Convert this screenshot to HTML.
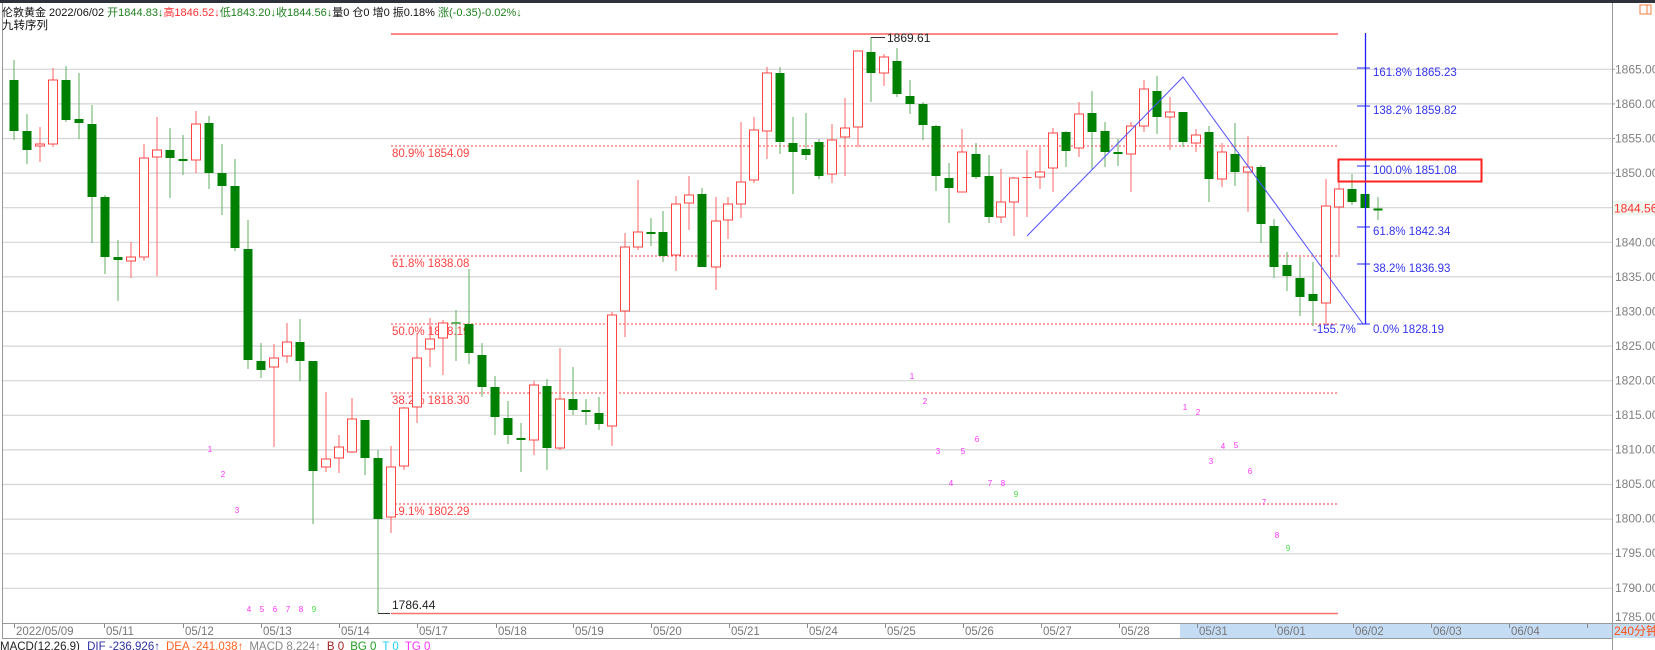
<!DOCTYPE html>
<html><head><meta charset="utf-8"><style>
html,body{margin:0;padding:0;background:#fff;width:1655px;height:650px;overflow:hidden}
svg{display:block}
text{font-family:"Liberation Sans","Noto Sans CJK SC",sans-serif}
</style></head><body>
<svg width="1655" height="650" viewBox="0 0 1655 650" xmlns="http://www.w3.org/2000/svg">
<rect x="0" y="0" width="1655" height="650" fill="#fff"/>
<rect x="0" y="0" width="1655" height="3" fill="#2e333b"/>
<line x1="2.5" y1="3" x2="2.5" y2="638" stroke="#999"/>
<g stroke="#d4d4d4" stroke-width="1.2">
<line x1="3" y1="69.3" x2="1612" y2="69.3"/><line x1="3" y1="103.9" x2="1612" y2="103.9"/>
<line x1="3" y1="138.5" x2="1612" y2="138.5"/><line x1="3" y1="173.1" x2="1612" y2="173.1"/>
<line x1="3" y1="207.7" x2="1612" y2="207.7"/><line x1="3" y1="242.3" x2="1612" y2="242.3"/>
<line x1="3" y1="276.9" x2="1612" y2="276.9"/><line x1="3" y1="311.5" x2="1612" y2="311.5"/>
<line x1="3" y1="346.1" x2="1612" y2="346.1"/><line x1="3" y1="380.7" x2="1612" y2="380.7"/>
<line x1="3" y1="415.3" x2="1612" y2="415.3"/><line x1="3" y1="449.9" x2="1612" y2="449.9"/>
<line x1="3" y1="484.5" x2="1612" y2="484.5"/><line x1="3" y1="519.1" x2="1612" y2="519.1"/>
<line x1="3" y1="553.7" x2="1612" y2="553.7"/><line x1="3" y1="588.3" x2="1612" y2="588.3"/>
</g>
<line x1="1612.5" y1="3" x2="1612.5" y2="650" stroke="#999"/>
<g font-size="12" fill="#808080">
<text x="1615" y="73.5">1865.00</text><text x="1615" y="108">1860.00</text>
<text x="1615" y="142.5">1855.00</text><text x="1615" y="177">1850.00</text>
<text x="1615" y="246.5">1840.00</text><text x="1615" y="281">1835.00</text>
<text x="1615" y="315.5">1830.00</text><text x="1615" y="350">1825.00</text>
<text x="1615" y="384.5">1820.00</text><text x="1615" y="419">1815.00</text>
<text x="1615" y="453.5">1810.00</text><text x="1615" y="488">1805.00</text>
<text x="1615" y="522.5">1800.00</text><text x="1615" y="557">1795.00</text>
<text x="1615" y="592">1790.00</text><text x="1615" y="621">1785.00</text>
</g>
<g stroke="#999" stroke-width="1">
<line x1="1612" y1="69.3" x2="1615" y2="69.3"/><line x1="1612" y1="103.9" x2="1615" y2="103.9"/><line x1="1612" y1="138.5" x2="1615" y2="138.5"/><line x1="1612" y1="173.1" x2="1615" y2="173.1"/>
</g>
<rect x="1613" y="201" width="42" height="14" fill="#eef7ee"/>
<text x="1614" y="212.5" font-size="12" fill="#ff3030">1844.56</text>
<rect x="1640" y="5" width="11" height="9" fill="none" stroke="#f08040"/>
<line x1="1647" y1="5" x2="1647" y2="14" stroke="#f08040"/>
<line x1="391" y1="34" x2="1338" y2="34" stroke="#ff4040" stroke-width="1.3"/>
<line x1="391" y1="613.5" x2="1338" y2="613.5" stroke="#ff7070" stroke-width="1.5"/>
<g stroke="#ff4040" stroke-dasharray="2,2" stroke-width="1">
<line x1="391" y1="146" x2="1338" y2="146"/><line x1="391" y1="256" x2="1338" y2="256"/>
<line x1="391" y1="324" x2="1338" y2="324"/><line x1="391" y1="393" x2="1338" y2="393"/>
<line x1="391" y1="504" x2="1338" y2="504"/>
</g>
<g font-size="11.5" fill="#ff4040">
<text x="392" y="157">80.9% 1854.09</text><text x="392" y="267">61.8% 1838.08</text>
<text x="392" y="335">50.0% 1828.19</text><text x="392" y="404">38.2% 1818.30</text>
<text x="392" y="515">19.1% 1802.29</text>
</g>
<g>
<line x1="14" y1="60" x2="14" y2="140" stroke="#5fae5f"/><rect x="9.5" y="80" width="9" height="51" fill="#008000"/>
<line x1="27" y1="114" x2="27" y2="164" stroke="#5fae5f"/><rect x="22.5" y="131" width="9" height="19" fill="#008000"/>
<line x1="40" y1="127" x2="40" y2="162" stroke="#ff6666"/><rect x="35.5" y="144" width="9" height="2" fill="#fff" stroke="#ff4444"/>
<line x1="53" y1="68" x2="53" y2="147" stroke="#ff6666"/><rect x="48.5" y="80" width="9" height="64" fill="#fff" stroke="#ff4444"/>
<line x1="66" y1="66" x2="66" y2="122" stroke="#5fae5f"/><rect x="61.5" y="80" width="9" height="40" fill="#008000"/>
<line x1="79" y1="73" x2="79" y2="139" stroke="#5fae5f"/><rect x="74.5" y="119" width="9" height="4" fill="#008000"/>
<line x1="92" y1="105" x2="92" y2="243" stroke="#5fae5f"/><rect x="87.5" y="124" width="9" height="73" fill="#008000"/>
<line x1="105" y1="195" x2="105" y2="274" stroke="#5fae5f"/><rect x="100.5" y="197" width="9" height="60" fill="#008000"/>
<line x1="118" y1="240" x2="118" y2="301" stroke="#5fae5f"/><rect x="113.5" y="257" width="9" height="3" fill="#008000"/>
<line x1="131" y1="242" x2="131" y2="278" stroke="#ff6666"/><rect x="126.5" y="257" width="9" height="4" fill="#fff" stroke="#ff4444"/>
<line x1="144" y1="144" x2="144" y2="261" stroke="#ff6666"/><rect x="139.5" y="158" width="9" height="99" fill="#fff" stroke="#ff4444"/>
<line x1="157" y1="117" x2="157" y2="276" stroke="#ff6666"/><rect x="152.5" y="150" width="9" height="7" fill="#fff" stroke="#ff4444"/>
<line x1="170" y1="128" x2="170" y2="198" stroke="#5fae5f"/><rect x="165.5" y="150" width="9" height="8" fill="#008000"/>
<line x1="183" y1="135" x2="183" y2="175" stroke="#5fae5f"/><rect x="178.5" y="159" width="9" height="2" fill="#008000"/>
<line x1="196" y1="111" x2="196" y2="173" stroke="#ff6666"/><rect x="191.5" y="124" width="9" height="36" fill="#fff" stroke="#ff4444"/>
<line x1="209" y1="116" x2="209" y2="189" stroke="#5fae5f"/><rect x="204.5" y="123" width="9" height="50" fill="#008000"/>
<line x1="222" y1="144" x2="222" y2="215" stroke="#5fae5f"/><rect x="217.5" y="173" width="9" height="13" fill="#008000"/>
<line x1="235" y1="159" x2="235" y2="251" stroke="#5fae5f"/><rect x="230.5" y="186" width="9" height="62" fill="#008000"/>
<line x1="248" y1="220" x2="248" y2="369" stroke="#5fae5f"/><rect x="243.5" y="249" width="9" height="111" fill="#008000"/>
<line x1="261" y1="343" x2="261" y2="378" stroke="#5fae5f"/><rect x="256.5" y="361" width="9" height="9" fill="#008000"/>
<line x1="274" y1="344" x2="274" y2="447" stroke="#ff6666"/><rect x="269.5" y="358" width="9" height="9" fill="#fff" stroke="#ff4444"/>
<line x1="287" y1="323" x2="287" y2="363" stroke="#ff6666"/><rect x="282.5" y="342" width="9" height="14" fill="#fff" stroke="#ff4444"/>
<line x1="300" y1="319" x2="300" y2="381" stroke="#5fae5f"/><rect x="295.5" y="342" width="9" height="19" fill="#008000"/>
<line x1="313" y1="361" x2="313" y2="524" stroke="#5fae5f"/><rect x="308.5" y="361" width="9" height="110" fill="#008000"/>
<line x1="326" y1="392" x2="326" y2="472" stroke="#ff6666"/><rect x="321.5" y="459" width="9" height="8" fill="#fff" stroke="#ff4444"/>
<line x1="339" y1="435" x2="339" y2="473" stroke="#ff6666"/><rect x="334.5" y="447" width="9" height="11" fill="#fff" stroke="#ff4444"/>
<line x1="352" y1="398" x2="352" y2="453" stroke="#ff6666"/><rect x="347.5" y="419" width="9" height="33" fill="#fff" stroke="#ff4444"/>
<line x1="365" y1="420" x2="365" y2="475" stroke="#5fae5f"/><rect x="360.5" y="420" width="9" height="38" fill="#008000"/>
<line x1="378" y1="450" x2="378" y2="613" stroke="#5fae5f"/><rect x="373.5" y="458" width="9" height="61" fill="#008000"/>
<line x1="391" y1="446" x2="391" y2="533" stroke="#ff6666"/><rect x="386.5" y="467" width="9" height="50" fill="#fff" stroke="#ff4444"/>
<line x1="404" y1="407" x2="404" y2="470" stroke="#ff6666"/><rect x="399.5" y="408" width="9" height="58" fill="#fff" stroke="#ff4444"/>
<line x1="417" y1="333" x2="417" y2="423" stroke="#ff6666"/><rect x="412.5" y="358" width="9" height="49" fill="#fff" stroke="#ff4444"/>
<line x1="430" y1="318" x2="430" y2="367" stroke="#ff6666"/><rect x="425.5" y="339" width="9" height="10" fill="#fff" stroke="#ff4444"/>
<line x1="443" y1="320" x2="443" y2="375" stroke="#ff6666"/><rect x="438.5" y="323" width="9" height="15" fill="#fff" stroke="#ff4444"/>
<line x1="456" y1="310" x2="456" y2="361" stroke="#5fae5f"/><rect x="451.5" y="322" width="9" height="2" fill="#5fae5f"/>
<line x1="469" y1="269" x2="469" y2="364" stroke="#5fae5f"/><rect x="464.5" y="324" width="9" height="29" fill="#008000"/>
<line x1="482" y1="343" x2="482" y2="397" stroke="#5fae5f"/><rect x="477.5" y="355" width="9" height="32" fill="#008000"/>
<line x1="495" y1="376" x2="495" y2="435" stroke="#5fae5f"/><rect x="490.5" y="387" width="9" height="30" fill="#008000"/>
<line x1="508" y1="401" x2="508" y2="444" stroke="#5fae5f"/><rect x="503.5" y="418" width="9" height="17" fill="#008000"/>
<line x1="521" y1="423" x2="521" y2="472" stroke="#5fae5f"/><rect x="516.5" y="438" width="9" height="2" fill="#008000"/>
<line x1="534" y1="381" x2="534" y2="455" stroke="#ff6666"/><rect x="529.5" y="385" width="9" height="55" fill="#fff" stroke="#ff4444"/>
<line x1="547" y1="379" x2="547" y2="470" stroke="#5fae5f"/><rect x="542.5" y="386" width="9" height="62" fill="#008000"/>
<line x1="560" y1="348" x2="560" y2="450" stroke="#ff6666"/><rect x="555.5" y="399" width="9" height="49" fill="#fff" stroke="#ff4444"/>
<line x1="573" y1="367" x2="573" y2="415" stroke="#5fae5f"/><rect x="568.5" y="399" width="9" height="11" fill="#008000"/>
<line x1="586" y1="399" x2="586" y2="425" stroke="#5fae5f"/><rect x="581.5" y="410" width="9" height="2" fill="#008000"/>
<line x1="599" y1="397" x2="599" y2="430" stroke="#5fae5f"/><rect x="594.5" y="413" width="9" height="11" fill="#008000"/>
<line x1="612" y1="312" x2="612" y2="446" stroke="#ff6666"/><rect x="607.5" y="315" width="9" height="111" fill="#fff" stroke="#ff4444"/>
<line x1="625" y1="233" x2="625" y2="337" stroke="#ff6666"/><rect x="620.5" y="247" width="9" height="64" fill="#fff" stroke="#ff4444"/>
<line x1="638" y1="180" x2="638" y2="250" stroke="#ff6666"/><rect x="633.5" y="232" width="9" height="15" fill="#fff" stroke="#ff4444"/>
<line x1="651" y1="218" x2="651" y2="246" stroke="#5fae5f"/><rect x="646.5" y="232" width="9" height="2" fill="#008000"/>
<line x1="663" y1="211" x2="663" y2="262" stroke="#5fae5f"/><rect x="658.5" y="232" width="9" height="24" fill="#008000"/>
<line x1="676" y1="196" x2="676" y2="271" stroke="#ff6666"/><rect x="671.5" y="204" width="9" height="51" fill="#fff" stroke="#ff4444"/>
<line x1="689" y1="176" x2="689" y2="230" stroke="#ff6666"/><rect x="684.5" y="195" width="9" height="8" fill="#fff" stroke="#ff4444"/>
<line x1="702" y1="188" x2="702" y2="267" stroke="#5fae5f"/><rect x="697.5" y="194" width="9" height="73" fill="#008000"/>
<line x1="716" y1="197" x2="716" y2="290" stroke="#ff6666"/><rect x="711.5" y="221" width="9" height="46" fill="#fff" stroke="#ff4444"/>
<line x1="728" y1="197" x2="728" y2="239" stroke="#ff6666"/><rect x="723.5" y="204" width="9" height="16" fill="#fff" stroke="#ff4444"/>
<line x1="741" y1="122" x2="741" y2="218" stroke="#ff6666"/><rect x="736.5" y="182" width="9" height="22" fill="#fff" stroke="#ff4444"/>
<line x1="754" y1="117" x2="754" y2="183" stroke="#ff6666"/><rect x="749.5" y="130" width="9" height="50" fill="#fff" stroke="#ff4444"/>
<line x1="767" y1="67" x2="767" y2="159" stroke="#ff6666"/><rect x="762.5" y="73" width="9" height="58" fill="#fff" stroke="#ff4444"/>
<line x1="780" y1="67" x2="780" y2="154" stroke="#5fae5f"/><rect x="775.5" y="73" width="9" height="69" fill="#008000"/>
<line x1="793" y1="117" x2="793" y2="194" stroke="#5fae5f"/><rect x="788.5" y="143" width="9" height="9" fill="#008000"/>
<line x1="806" y1="113" x2="806" y2="160" stroke="#5fae5f"/><rect x="801.5" y="149" width="9" height="6" fill="#008000"/>
<line x1="819" y1="139" x2="819" y2="179" stroke="#5fae5f"/><rect x="814.5" y="142" width="9" height="34" fill="#008000"/>
<line x1="832" y1="124" x2="832" y2="183" stroke="#ff6666"/><rect x="827.5" y="140" width="9" height="34" fill="#fff" stroke="#ff4444"/>
<line x1="845" y1="98" x2="845" y2="176" stroke="#ff6666"/><rect x="840.5" y="128" width="9" height="9" fill="#fff" stroke="#ff4444"/>
<line x1="858" y1="51" x2="858" y2="147" stroke="#ff6666"/><rect x="853.5" y="51" width="9" height="76" fill="#fff" stroke="#ff4444"/>
<line x1="871" y1="37" x2="871" y2="102" stroke="#5fae5f"/><rect x="866.5" y="52" width="9" height="21" fill="#008000"/>
<line x1="884" y1="54" x2="884" y2="86" stroke="#ff6666"/><rect x="879.5" y="57" width="9" height="16" fill="#fff" stroke="#ff4444"/>
<line x1="897" y1="48" x2="897" y2="97" stroke="#5fae5f"/><rect x="892.5" y="61" width="9" height="33" fill="#008000"/>
<line x1="910" y1="80" x2="910" y2="114" stroke="#5fae5f"/><rect x="905.5" y="96" width="9" height="8" fill="#008000"/>
<line x1="923" y1="102" x2="923" y2="140" stroke="#5fae5f"/><rect x="918.5" y="104" width="9" height="21" fill="#008000"/>
<line x1="936" y1="125" x2="936" y2="191" stroke="#5fae5f"/><rect x="931.5" y="126" width="9" height="50" fill="#008000"/>
<line x1="949" y1="163" x2="949" y2="223" stroke="#5fae5f"/><rect x="944.5" y="178" width="9" height="10" fill="#008000"/>
<line x1="962" y1="129" x2="962" y2="192" stroke="#ff6666"/><rect x="957.5" y="152" width="9" height="40" fill="#fff" stroke="#ff4444"/>
<line x1="976" y1="143" x2="976" y2="179" stroke="#5fae5f"/><rect x="971.5" y="154" width="9" height="23" fill="#008000"/>
<line x1="989" y1="155" x2="989" y2="223" stroke="#5fae5f"/><rect x="984.5" y="176" width="9" height="41" fill="#008000"/>
<line x1="1001" y1="169" x2="1001" y2="223" stroke="#ff6666"/><rect x="996.5" y="202" width="9" height="15" fill="#fff" stroke="#ff4444"/>
<line x1="1014" y1="177" x2="1014" y2="236" stroke="#ff6666"/><rect x="1009.5" y="178" width="9" height="24" fill="#fff" stroke="#ff4444"/>
<line x1="1027" y1="150" x2="1027" y2="217" stroke="#ff6666"/><rect x="1022.5" y="177" width="9" height="1" fill="#ff4444"/>
<line x1="1040" y1="147" x2="1040" y2="189" stroke="#ff6666"/><rect x="1035.5" y="172" width="9" height="5" fill="#fff" stroke="#ff4444"/>
<line x1="1053" y1="128" x2="1053" y2="192" stroke="#ff6666"/><rect x="1048.5" y="133" width="9" height="35" fill="#fff" stroke="#ff4444"/>
<line x1="1066" y1="131" x2="1066" y2="167" stroke="#5fae5f"/><rect x="1061.5" y="132" width="9" height="19" fill="#008000"/>
<line x1="1079" y1="102" x2="1079" y2="157" stroke="#ff6666"/><rect x="1074.5" y="114" width="9" height="34" fill="#fff" stroke="#ff4444"/>
<line x1="1092" y1="91" x2="1092" y2="170" stroke="#5fae5f"/><rect x="1087.5" y="113" width="9" height="19" fill="#008000"/>
<line x1="1105" y1="122" x2="1105" y2="167" stroke="#5fae5f"/><rect x="1100.5" y="131" width="9" height="21" fill="#008000"/>
<line x1="1118" y1="139" x2="1118" y2="166" stroke="#5fae5f"/><rect x="1113.5" y="152" width="9" height="2" fill="#008000"/>
<line x1="1131" y1="122" x2="1131" y2="192" stroke="#ff6666"/><rect x="1126.5" y="126" width="9" height="28" fill="#fff" stroke="#ff4444"/>
<line x1="1144" y1="80" x2="1144" y2="132" stroke="#ff6666"/><rect x="1139.5" y="89" width="9" height="37" fill="#fff" stroke="#ff4444"/>
<line x1="1157" y1="76" x2="1157" y2="134" stroke="#5fae5f"/><rect x="1152.5" y="91" width="9" height="26" fill="#008000"/>
<line x1="1170" y1="97" x2="1170" y2="150" stroke="#ff6666"/><rect x="1165.5" y="112" width="9" height="5" fill="#fff" stroke="#ff4444"/>
<line x1="1183" y1="112" x2="1183" y2="147" stroke="#5fae5f"/><rect x="1178.5" y="112" width="9" height="30" fill="#008000"/>
<line x1="1196" y1="129" x2="1196" y2="152" stroke="#ff6666"/><rect x="1191.5" y="135" width="9" height="8" fill="#fff" stroke="#ff4444"/>
<line x1="1209" y1="126" x2="1209" y2="202" stroke="#5fae5f"/><rect x="1204.5" y="132" width="9" height="47" fill="#008000"/>
<line x1="1222" y1="143" x2="1222" y2="187" stroke="#ff6666"/><rect x="1217.5" y="152" width="9" height="27" fill="#fff" stroke="#ff4444"/>
<line x1="1235" y1="123" x2="1235" y2="186" stroke="#5fae5f"/><rect x="1230.5" y="154" width="9" height="18" fill="#008000"/>
<line x1="1248" y1="136" x2="1248" y2="212" stroke="#ff6666"/><rect x="1243.5" y="167" width="9" height="5" fill="#fff" stroke="#ff4444"/>
<line x1="1261" y1="165" x2="1261" y2="243" stroke="#5fae5f"/><rect x="1256.5" y="167" width="9" height="57" fill="#008000"/>
<line x1="1274" y1="219" x2="1274" y2="278" stroke="#5fae5f"/><rect x="1269.5" y="226" width="9" height="41" fill="#008000"/>
<line x1="1287" y1="252" x2="1287" y2="291" stroke="#5fae5f"/><rect x="1282.5" y="265" width="9" height="11" fill="#008000"/>
<line x1="1300" y1="257" x2="1300" y2="316" stroke="#5fae5f"/><rect x="1295.5" y="278" width="9" height="19" fill="#008000"/>
<line x1="1313" y1="262" x2="1313" y2="326" stroke="#5fae5f"/><rect x="1308.5" y="294" width="9" height="7" fill="#008000"/>
<line x1="1326" y1="179" x2="1326" y2="325" stroke="#ff6666"/><rect x="1321.5" y="206" width="9" height="97" fill="#fff" stroke="#ff4444"/>
<line x1="1339" y1="177" x2="1339" y2="257" stroke="#ff6666"/><rect x="1334.5" y="189" width="9" height="18" fill="#fff" stroke="#ff4444"/>
<line x1="1352" y1="174" x2="1352" y2="205" stroke="#5fae5f"/><rect x="1347.5" y="189" width="9" height="13" fill="#008000"/>
<rect x="1360.5" y="194" width="9" height="14" fill="#008000"/>
<line x1="1378" y1="197" x2="1378" y2="220" stroke="#5fae5f"/><rect x="1373.5" y="208.5" width="9" height="2" fill="#008000"/>
</g>
<line x1="871" y1="37.5" x2="885" y2="37.5" stroke="#333"/>
<text x="887" y="42" font-size="12" fill="#222">1869.61</text>
<line x1="378" y1="613.5" x2="390" y2="613.5" stroke="#333"/>
<text x="392" y="609" font-size="12" fill="#222">1786.44</text>
<polyline points="1027,236 1183,77 1363,324" fill="none" stroke="#5050ff" stroke-width="1"/>
<line x1="1365.5" y1="33" x2="1365.5" y2="324" stroke="#2020ff" stroke-width="1.3"/>
<g stroke="#2020ff"><line x1="1357" y1="68" x2="1370" y2="68"/><line x1="1357" y1="106" x2="1370" y2="106"/>
<line x1="1357" y1="166" x2="1370" y2="166"/><line x1="1357" y1="227" x2="1370" y2="227"/>
<line x1="1357" y1="264" x2="1370" y2="264"/><line x1="1357" y1="324" x2="1370" y2="324"/></g>
<g font-size="11.5" fill="#3333ee">
<text x="1373" y="76">161.8% 1865.23</text><text x="1373" y="114">138.2% 1859.82</text>
<text x="1373" y="174">100.0% 1851.08</text><text x="1373" y="235">61.8% 1842.34</text>
<text x="1373" y="272">38.2% 1836.93</text><text x="1373" y="333">0.0% 1828.19</text>
<text x="1313" y="333">-155.7%</text>
</g>
<rect x="1338.5" y="159.5" width="143" height="22" fill="none" stroke="#ff2020" stroke-width="2"/>
<g font-size="8" fill="#ff30ff" text-anchor="middle">
<text x="210" y="452">1</text><text x="223" y="477">2</text><text x="237" y="513">3</text>
<text x="249" y="612">4</text><text x="262" y="612">5</text><text x="275" y="612">6</text><text x="288" y="612">7</text><text x="301" y="612">8</text>
<text x="912" y="379">1</text><text x="925" y="404">2</text><text x="938" y="454">3</text><text x="951" y="486">4</text><text x="963" y="454">5</text><text x="977" y="442">6</text><text x="990" y="486">7</text><text x="1003" y="486">8</text>
<text x="1185" y="410">1</text><text x="1198" y="415">2</text><text x="1211" y="464">3</text><text x="1223" y="449">4</text><text x="1236" y="448">5</text><text x="1250" y="474">6</text><text x="1264" y="505">7</text><text x="1277" y="538">8</text>
</g>
<g font-size="8" fill="#40e040" text-anchor="middle"><text x="314" y="612">9</text><text x="1016" y="497">9</text><text x="1288" y="551">9</text></g>
<rect x="1180" y="623" width="432" height="15" fill="#c5dcf5"/>
<line x1="2" y1="623.5" x2="1655" y2="623.5" stroke="#999"/>
<line x1="2" y1="638.5" x2="1612" y2="638.5" stroke="#999"/>
<g stroke="#888"><line x1="14.5" y1="624" x2="14.5" y2="628"/><line x1="104.5" y1="624" x2="104.5" y2="628"/><line x1="183.5" y1="624" x2="183.5" y2="628"/><line x1="261.5" y1="624" x2="261.5" y2="628"/><line x1="339.5" y1="624" x2="339.5" y2="628"/><line x1="417.5" y1="624" x2="417.5" y2="628"/><line x1="496.5" y1="624" x2="496.5" y2="628"/><line x1="573.5" y1="624" x2="573.5" y2="628"/><line x1="651.5" y1="624" x2="651.5" y2="628"/><line x1="729.5" y1="624" x2="729.5" y2="628"/><line x1="807.5" y1="624" x2="807.5" y2="628"/><line x1="885.5" y1="624" x2="885.5" y2="628"/><line x1="963.5" y1="624" x2="963.5" y2="628"/><line x1="1041.5" y1="624" x2="1041.5" y2="628"/><line x1="1119.5" y1="624" x2="1119.5" y2="628"/><line x1="1197.5" y1="624" x2="1197.5" y2="628"/><line x1="1275.5" y1="624" x2="1275.5" y2="628"/><line x1="1353.5" y1="624" x2="1353.5" y2="628"/><line x1="1431.5" y1="624" x2="1431.5" y2="628"/><line x1="1509.5" y1="624" x2="1509.5" y2="628"/><line x1="1587.5" y1="624" x2="1587.5" y2="628"/></g>
<g font-size="11.5" fill="#777">
<text x="16" y="635">2022/05/09</text><text x="106" y="635">05/11</text><text x="185" y="635">05/12</text><text x="263" y="635">05/13</text><text x="341" y="635">05/14</text><text x="419" y="635">05/17</text><text x="498" y="635">05/18</text><text x="575" y="635">05/19</text><text x="653" y="635">05/20</text><text x="731" y="635">05/21</text><text x="809" y="635">05/24</text><text x="887" y="635">05/25</text><text x="965" y="635">05/26</text><text x="1043" y="635">05/27</text><text x="1121" y="635">05/28</text><text x="1199" y="635">05/31</text><text x="1277" y="635">06/01</text><text x="1355" y="635">06/02</text><text x="1433" y="635">06/03</text><text x="1511" y="635">06/04</text>
</g>
<rect x="1613" y="624" width="42" height="14" fill="#c5dcf5"/>
<text x="1614" y="635" font-size="12" fill="#ff5010">240分钟</text>
<text x="0" y="650" font-size="11.5" fill="#222">MACD(12,26,9)
<tspan fill="#3030a0" dx="4">DIF -236.926↑</tspan><tspan fill="#ff6020" dx="6">DEA -241.038↑</tspan><tspan fill="#888" dx="6">MACD 8.224↑</tspan><tspan fill="#a02020" dx="6">B 0</tspan><tspan fill="#20a020" dx="6">BG 0</tspan><tspan fill="#20d0f0" dx="6">T 0</tspan><tspan fill="#ff30ff" dx="6">TG 0</tspan></text>
<text x="2" y="16" font-size="11" fill="#111">伦敦黄金 2022/06/02 <tspan fill="#208020">开1844.83↓</tspan><tspan fill="#ff3030">高1846.52↓</tspan><tspan fill="#208020">低1843.20↓收1844.56↓</tspan>量0  仓0 增0 振0.18% <tspan fill="#208020">涨(-0.35)-0.02%↓</tspan></text>
<text x="2" y="29" font-size="11.5" fill="#111">九转序列</text>
</svg>
</body></html>
